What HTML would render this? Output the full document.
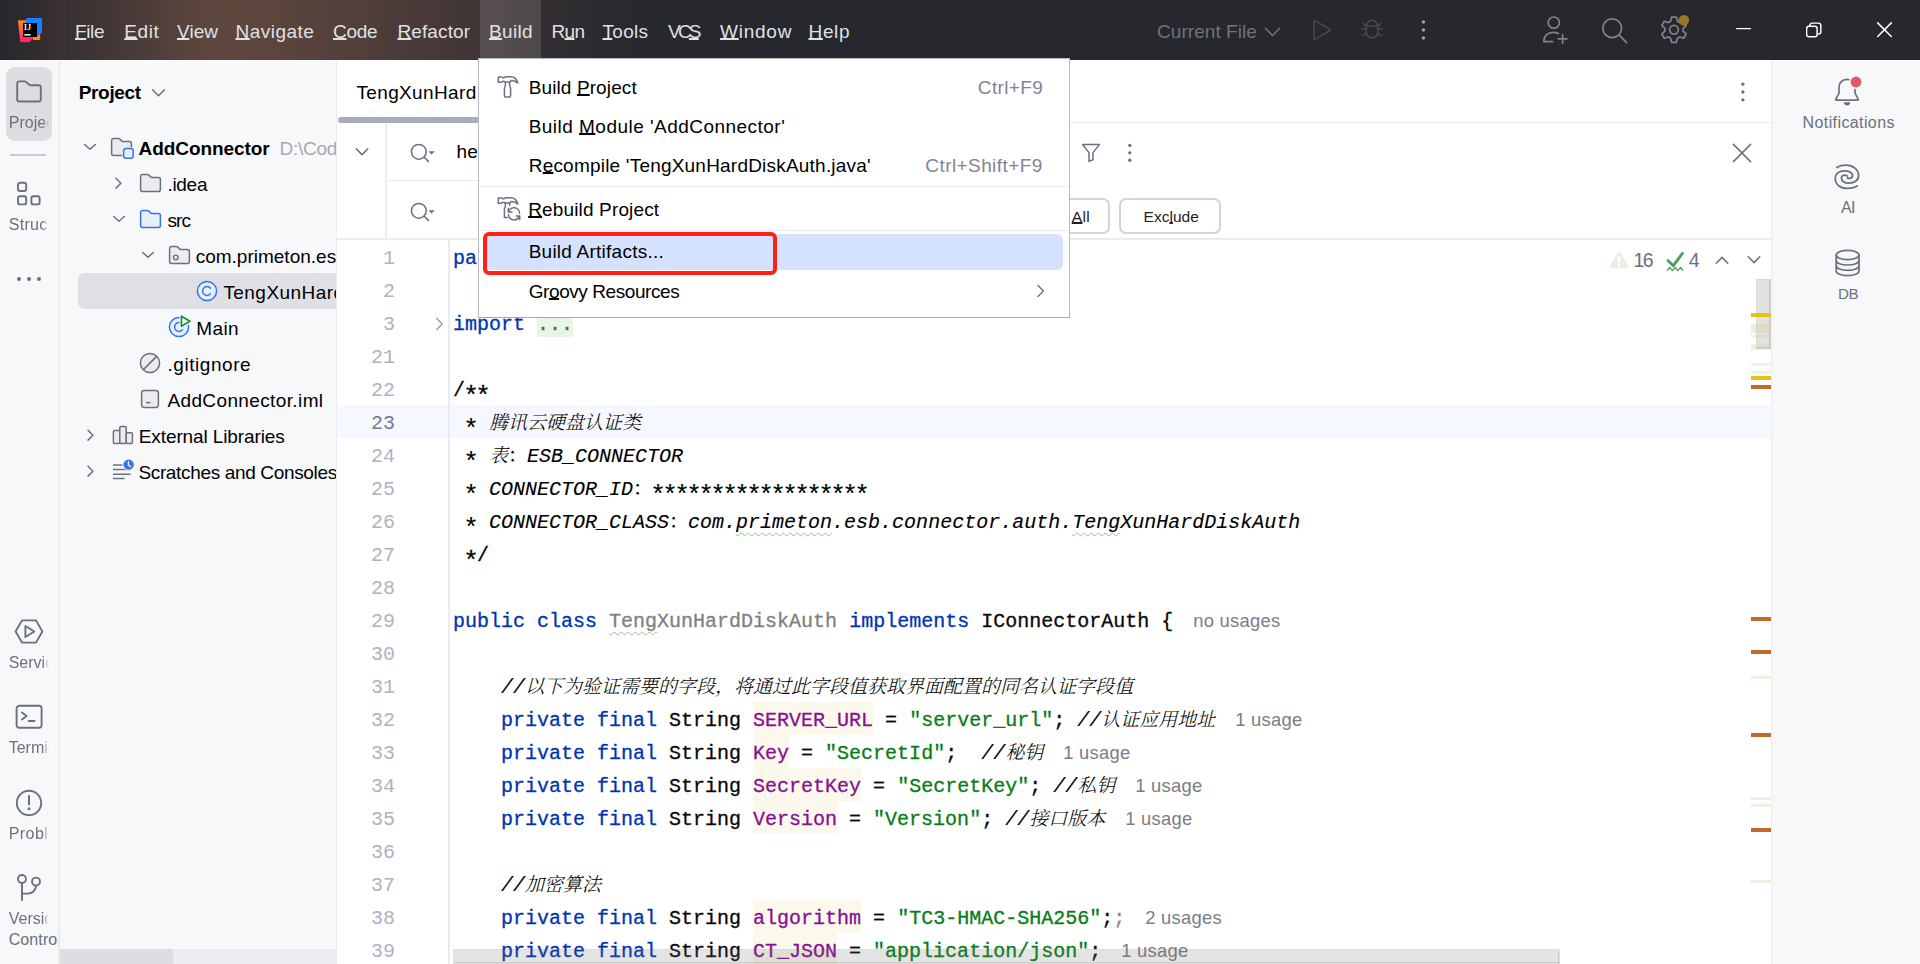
<!DOCTYPE html>
<html lang="en"><head><meta charset="utf-8"><title>AddConnector – TengXunHardDiskAuth.java</title>
<style>
html,body{margin:0;padding:0}
body{width:1920px;height:964px;overflow:hidden;background:#fff;position:relative;font-family:"Liberation Sans","Noto Sans CJK SC",sans-serif;-webkit-font-smoothing:antialiased}
.t{position:absolute;line-height:0;white-space:nowrap}
.t:before{content:"";display:inline-block;height:40px;width:0}
u{text-decoration:underline;text-underline-offset:0.3px;text-decoration-thickness:var(--ulw,1.5px);text-decoration-skip-ink:none}
.mono{font-family:"Liberation Mono","Noto Serif CJK SC",monospace}
.clip{overflow:hidden;padding-bottom:12px}
svg{overflow:visible}

.k{color:#0033b3}.s{color:#067d17}.f{color:#871094}.c{font-style:italic;color:#000;-webkit-text-stroke:0.12px currentColor}.cj{font-size:19px;-webkit-text-stroke:0;font-weight:300}
.h{font-family:"Liberation Sans","Noto Sans CJK SC",sans-serif;font-size:18.4px;color:#7a7e85;margin-left:20px;font-style:normal;-webkit-text-stroke:0;letter-spacing:0.25px}
.w{text-decoration:underline wavy #8fbf8f;text-decoration-thickness:1px;text-underline-offset:4px;text-decoration-skip-ink:none}
.g{color:#808080}
.a{font-size:26px;letter-spacing:-3.6px;position:relative;top:8.2px;margin-left:-1.8px;margin-right:1.8px;font-style:normal}
.code{white-space:pre;-webkit-text-stroke:0.3px currentColor}

</style></head><body>
<div id="titlebar" style="position:absolute;left:0;top:0;width:1920px;height:60px;background:#27282e">
<div class="" style="position:absolute;left:0px;top:0px;width:66px;height:60px;background:linear-gradient(90deg,#27282e 0px,#2c2a2e 25px,#3c3233 66px);"></div>
<div class="" style="position:absolute;left:66px;top:0px;width:640px;height:60px;background:linear-gradient(90deg,#373031 0px,#4a3b38 70px,#5b453d 130px,#5f473e 165px,#5a443c 215px,#4c3c39 330px,#3f3435 420px,#332e31 480px,#2a2a2f 540px,#27282e 600px);"></div>
<div class="" style="position:absolute;left:480px;top:0px;width:61px;height:60px;background:rgba(255,255,255,0.13);"></div>
</div>
<svg style="position:absolute;left:16px;top:16px;" width="28" height="28" viewBox="0 0 28 28" fill="none">
<defs><linearGradient id="lg1" x1="4" y1="4" x2="14" y2="26" gradientUnits="userSpaceOnUse"><stop offset="0" stop-color="#ff8a1a"/><stop offset="0.45" stop-color="#ff5a3c"/><stop offset="0.75" stop-color="#ff2d5e"/><stop offset="1" stop-color="#ff2d5e"/></linearGradient>
<linearGradient id="lg2" x1="10" y1="2" x2="26" y2="18" gradientUnits="userSpaceOnUse"><stop offset="0" stop-color="#0a84ff"/><stop offset="1" stop-color="#1f7bff"/></linearGradient></defs>
<path d="M2.6 4.2h7.2l8.4 16.5-4.6 5.5H5.2a1 1 0 0 1-1-.9L2 5.2a.9.9 0 0 1 .6-1z" fill="url(#lg1)"/>
<path d="M17 19h7.2v4a1 1 0 0 1-1 1H17z" fill="#ff8a00"/>
<path d="M11 2h14a1 1 0 0 1 1 1v13.5l-4.5 3.5H9.5V4z" fill="url(#lg2)"/>
<path d="M21.2 17.5l4.8-1.5-3 3.5h-2z" fill="#5b6bf0"/>
<rect x="7" y="7" width="14" height="14" fill="#000"/>
<rect x="8.3" y="18" width="6.3" height="1.7" fill="#d8d8d8"/>
<text x="8.1" y="13.8" font-family="Liberation Serif,serif" font-weight="bold" font-size="7.6" fill="#fff" letter-spacing="0.2">IJ</text>
</svg>
<div class="t " style="left:75.0px;top:-2.0px;font-size:19px;color:#dfe1e5;letter-spacing:-0.38px;"><u>F</u>ile</div>
<div class="t " style="left:124.3px;top:-2.0px;font-size:19px;color:#dfe1e5;letter-spacing:0.59px;"><u>E</u>dit</div>
<div class="t " style="left:177.0px;top:-2.0px;font-size:19px;color:#dfe1e5;letter-spacing:0.03px;"><u>V</u>iew</div>
<div class="t " style="left:235.5px;top:-2.0px;font-size:19px;color:#dfe1e5;letter-spacing:0.47px;"><u>N</u>avigate</div>
<div class="t " style="left:333.0px;top:-2.0px;font-size:19px;color:#dfe1e5;letter-spacing:-0.30px;"><u>C</u>ode</div>
<div class="t " style="left:397.5px;top:-2.0px;font-size:19px;color:#dfe1e5;letter-spacing:0.10px;"><u>R</u>efactor</div>
<div class="t " style="left:489.0px;top:-2.0px;font-size:19px;color:#dfe1e5;letter-spacing:0.32px;"><u>B</u>uild</div>
<div class="t " style="left:551.5px;top:-2.0px;font-size:19px;color:#dfe1e5;letter-spacing:-0.68px;">R<u>u</u>n</div>
<div class="t " style="left:602.5px;top:-2.0px;font-size:19px;color:#dfe1e5;letter-spacing:0.28px;"><u>T</u>ools</div>
<div class="t " style="left:668.0px;top:-2.0px;font-size:19px;color:#dfe1e5;letter-spacing:-2.77px;">VC<u>S</u></div>
<div class="t " style="left:720.0px;top:-2.0px;font-size:19px;color:#dfe1e5;letter-spacing:0.77px;"><u>W</u>indow</div>
<div class="t " style="left:808.5px;top:-2.0px;font-size:19px;color:#dfe1e5;letter-spacing:0.64px;"><u>H</u>elp</div>
<div class="t " style="left:1157.0px;top:-2.0px;font-size:19px;color:#6f737a;letter-spacing:0.05px;">Current File</div>
<svg style="position:absolute;left:1264px;top:26px;" width="17" height="12" viewBox="0 0 17 12" fill="none"><path d="M1.5 2.5l7 7 7-7" stroke="#6f737a" stroke-width="1.6" stroke-linecap="round" stroke-linejoin="round"/></svg>
<svg style="position:absolute;left:1311px;top:19px;" width="22" height="22" viewBox="0 0 22 22" fill="none"><path d="M3 2.6v16.8a.8.8 0 0 0 1.2.7l14.6-8.4a.8.8 0 0 0 0-1.4L4.2 1.9A.8.8 0 0 0 3 2.6z" stroke="#46484e" stroke-width="1.6" stroke-linejoin="round"/></svg>
<svg style="position:absolute;left:1360px;top:18px;" width="24" height="22" viewBox="0 0 24 22" fill="none"><g stroke="#46484e" stroke-width="1.6" stroke-linecap="round" stroke-linejoin="round">
<path d="M7 7.2a5 5 0 0 1 10 0"/><path d="M6.2 8h11.6v6a5.8 5.8 0 0 1-11.6 0z"/>
<path d="M6 11H1.8M6 15.5l-3.6 2.3M6.3 8L3.3 5.4M18 11h4.2M18 15.5l3.6 2.3M17.7 8l3-2.6"/></g></svg>
<svg style="position:absolute;left:1418px;top:18px;" width="10" height="24" viewBox="0 0 10 24" fill="none"><g fill="#9da0a8"><circle cx="5.4" cy="4" r="1.75"/><circle cx="5.4" cy="12" r="1.75"/><circle cx="5.4" cy="20" r="1.75"/></g></svg>
<svg style="position:absolute;left:1542px;top:15px;" width="28" height="30" viewBox="0 0 28 30" fill="none"><g stroke="#7f838c" stroke-width="1.7" stroke-linecap="round" stroke-linejoin="round">
<circle cx="11.8" cy="7.6" r="5.6"/><path d="M10.6 26.6H1.8c0-5.6 4-9.2 9.6-9.2 1.8 0 3.6.4 5 1.2"/><path d="M20.6 19.6v8.6M16.3 23.9h8.6"/></g></svg>
<svg style="position:absolute;left:1601px;top:17px;" width="28" height="28" viewBox="0 0 28 28" fill="none"><g stroke="#7f838c" stroke-width="1.8" stroke-linecap="round"><circle cx="11.2" cy="11.2" r="9.4"/><path d="M18.2 18.2l7.4 7.4"/></g></svg>
<svg style="position:absolute;left:1660px;top:15px;" width="30" height="30" viewBox="0 0 30 30" fill="none"><g stroke="#7f838c" stroke-width="1.45" stroke-linejoin="round" transform="translate(14 15) scale(1.18) translate(-14 -14.4)">
<path d="M11.9 2.2h4.2l.8 3.5 1.9 1.1 3.4-1.1 2.1 3.7-2.6 2.4v2.2l2.6 2.4-2.1 3.7-3.4-1.1-1.9 1.1-.8 3.5h-4.2l-.8-3.5-1.9-1.1-3.4 1.1-2.1-3.7 2.6-2.4v-2.2L3.7 9.4l2.1-3.7 3.4 1.1 1.9-1.1z" transform="translate(0,1.3)"/>
<circle cx="14" cy="14.2" r="3.7"/></g>
<circle cx="23.8" cy="5.3" r="5.4" fill="#9e7527"/></svg>
<svg style="position:absolute;left:1735px;top:26px;" width="18" height="6" viewBox="0 0 18 6" fill="none"><path d="M1.2 2.6h14.8" stroke="#fff" stroke-width="1.25"/></svg>
<svg style="position:absolute;left:1804.8px;top:21.6px;" width="19" height="17" viewBox="0 0 19 17" fill="none"><g stroke="#fff" stroke-width="1.55" fill="none" transform="scale(0.93)"><rect x="1.8" y="4.6" width="11.2" height="11.2" rx="2.4"/><path d="M5.2 4.4V3.6a2.4 2.4 0 0 1 2.4-2.4h7a2.4 2.4 0 0 1 2.4 2.4v7a2.4 2.4 0 0 1-2.4 2.4h-1.4"/></g></svg>
<svg style="position:absolute;left:1876px;top:21px;" width="17" height="17" viewBox="0 0 17 17" fill="none"><path d="M1.7 1.9l13.6 13.6M15.3 1.9L1.7 15.5" stroke="#fff" stroke-width="1.5" stroke-linecap="round"/></svg>
<div class="" style="position:absolute;left:0px;top:61px;width:58px;height:903px;background:#f7f8fa;"></div>
<div class="" style="position:absolute;left:0px;top:60px;width:1920px;height:1px;background:#fdfdfe;"></div>
<div class="" style="position:absolute;left:58px;top:61px;width:2px;height:903px;background:#ebecf0;"></div>
<div class="" style="position:absolute;left:6px;top:67px;width:46px;height:74px;background:#dcdde1;border-radius:9px"></div>
<svg style="position:absolute;left:15px;top:80px;" width="28" height="23" viewBox="0 0 28 23" fill="none"><path d="M2.2 3.4a2 2 0 0 1 2-2h5.6a2 2 0 0 1 1.3.5l3.2 2.9a2 2 0 0 0 1.3.5h8.2a2 2 0 0 1 2 2v12.2a2 2 0 0 1-2 2H4.2a2 2 0 0 1-2-2z" stroke="#6c707e" stroke-width="1.9" stroke-linejoin="round"/></svg>
<div class="t" style="left:8.7px;top:88px;font-size:16px;color:#6c707e;width:40.5px;overflow:hidden;padding-bottom:12px;letter-spacing:0.05px;-webkit-mask-image:linear-gradient(90deg,#000 84%,transparent 100%);mask-image:linear-gradient(90deg,#000 84%,transparent 100%);">Project</div>
<div class="" style="position:absolute;left:10px;top:154px;width:36px;height:1.5px;background:#c9ccd6;"></div>
<svg style="position:absolute;left:16px;top:181px;" width="26" height="26" viewBox="0 0 26 26" fill="none"><g stroke="#6c707e" stroke-width="1.9"><rect x="2" y="1.8" width="8.2" height="8.2" rx="2"/><rect x="2" y="15.2" width="8.2" height="8.2" rx="2"/><rect x="15.4" y="15.2" width="8.2" height="8.2" rx="2"/></g></svg>
<div class="t" style="left:8.7px;top:190px;font-size:16px;color:#6c707e;width:40.5px;overflow:hidden;padding-bottom:12px;letter-spacing:0.30px;-webkit-mask-image:linear-gradient(90deg,#000 84%,transparent 100%);mask-image:linear-gradient(90deg,#000 84%,transparent 100%);">Structure</div>
<div class="" style="position:absolute;left:17px;top:277px;width:4px;height:4px;background:#6c707e;border-radius:50%"></div>
<div class="" style="position:absolute;left:27px;top:277px;width:4px;height:4px;background:#6c707e;border-radius:50%"></div>
<div class="" style="position:absolute;left:37px;top:277px;width:4px;height:4px;background:#6c707e;border-radius:50%"></div>
<svg style="position:absolute;left:14px;top:618px;" width="30" height="27" viewBox="0 0 30 27" fill="none"><g stroke="#6c707e" stroke-width="1.9" stroke-linejoin="round"><path d="M1.6 13.5L8 2.4h14L28.4 13.5 22 24.6H8z"/><path d="M11.4 8v11l9-5.5z"/></g></svg>
<div class="t" style="left:8.7px;top:628px;font-size:16px;color:#6c707e;width:40.5px;overflow:hidden;padding-bottom:12px;letter-spacing:0.00px;-webkit-mask-image:linear-gradient(90deg,#000 84%,transparent 100%);mask-image:linear-gradient(90deg,#000 84%,transparent 100%);">Services</div>
<svg style="position:absolute;left:15px;top:704px;" width="28" height="26" viewBox="0 0 28 26" fill="none"><g stroke="#6c707e" stroke-width="1.9" stroke-linecap="round" stroke-linejoin="round"><rect x="1.6" y="1.8" width="25" height="22" rx="2.6"/><path d="M7 8.4l4.6 3.6L7 15.6M13.6 17h6"/></g></svg>
<div class="t" style="left:8.7px;top:713px;font-size:16px;color:#6c707e;width:40.5px;overflow:hidden;padding-bottom:12px;letter-spacing:0.00px;-webkit-mask-image:linear-gradient(90deg,#000 84%,transparent 100%);mask-image:linear-gradient(90deg,#000 84%,transparent 100%);">Terminal</div>
<svg style="position:absolute;left:15px;top:789px;" width="28" height="28" viewBox="0 0 28 28" fill="none"><g stroke="#6c707e" stroke-width="1.9"><circle cx="14" cy="14" r="12.2"/><path d="M14 7v8.4" stroke-width="2" stroke-linecap="round"/></g><circle cx="14" cy="19.8" r="1.5" fill="#6c707e"/></svg>
<div class="t" style="left:8.7px;top:798.5px;font-size:16px;color:#6c707e;width:40.5px;overflow:hidden;padding-bottom:12px;letter-spacing:0.45px;-webkit-mask-image:linear-gradient(90deg,#000 84%,transparent 100%);mask-image:linear-gradient(90deg,#000 84%,transparent 100%);">Problems</div>
<svg style="position:absolute;left:16px;top:873px;" width="26" height="30" viewBox="0 0 26 30" fill="none"><g stroke="#6c707e" stroke-width="1.9" stroke-linecap="round"><circle cx="6" cy="6" r="4"/><circle cx="20" cy="8.6" r="4"/><path d="M6 10v17M6 20.6h6a8 8 0 0 0 8-8"/></g></svg>
<div class="t" style="left:8.7px;top:884px;font-size:16px;color:#6c707e;width:40.5px;overflow:hidden;padding-bottom:12px;letter-spacing:0.00px;-webkit-mask-image:linear-gradient(90deg,#000 84%,transparent 100%);mask-image:linear-gradient(90deg,#000 84%,transparent 100%);">Version</div>
<div class="t" style="left:8.7px;top:904.5px;font-size:16px;color:#6c707e;width:49.3px;overflow:hidden;padding-bottom:12px;letter-spacing:0.10px;">Control</div>
<div class="" style="position:absolute;left:60px;top:61px;width:276px;height:903px;background:#f7f8fa;overflow:hidden"></div>
<div class="t " style="left:78.7px;top:58.8px;font-size:19px;color:#000;font-weight:bold;letter-spacing:-0.32px;">Project</div>
<svg style="position:absolute;left:151px;top:88px;" width="15" height="10" viewBox="0 0 15 10" fill="none"><path d="M1.6 1.8l5.9 5.9 5.9-5.9" stroke="#6c707e" stroke-width="1.5" stroke-linecap="round" stroke-linejoin="round"/></svg>
<div class="" style="position:absolute;left:78px;top:273px;width:258px;height:35.5px;background:#dfe0e5;border-radius:7px 0 0 7px"></div>
<svg style="position:absolute;left:83px;top:143px;" width="14" height="10" viewBox="0 0 14 10" fill="none"><path d="M1.65 1.5l5.35 4.7 5.35-4.7" stroke="#6c707e" stroke-width="1.5" stroke-linecap="round" stroke-linejoin="round"/></svg>
<svg style="position:absolute;left:110px;top:137.1px;" width="23" height="20" viewBox="0 0 23 20" fill="none"><path d="M1.6 3.4a2 2 0 0 1 2-2h4.6a2 2 0 0 1 1.3.5l2.5 2.2a2 2 0 0 0 1.3.5h6.1a2 2 0 0 1 2 2v9.8a2 2 0 0 1-2 2H3.6a2 2 0 0 1-2-2z" stroke="#6c707e" stroke-width="1.5" fill="#ebecf0" stroke-linejoin="round"/><rect x="13.6" y="11.6" width="9.6" height="9.6" rx="2.4" fill="#f7f8fa" stroke="#f7f8fa" stroke-width="2.6"/><rect x="13.6" y="11.6" width="9.6" height="9.6" rx="2.4" fill="#e7effd" stroke="#3574f0" stroke-width="1.5"/></svg>
<div class="t " style="left:138.6px;top:114.6px;font-size:19px;color:#000;font-weight:bold;letter-spacing:-0.07px;">AddConnector</div>
<div class="t clip" style="left:279.5px;top:114.6px;font-size:19px;color:#a6a9b3;width:56.5px;letter-spacing:-0.25px">D:\Code\AddConnector</div>
<svg style="position:absolute;left:114px;top:177px;" width="10" height="14" viewBox="0 0 10 14" fill="none"><path d="M2 1.3l4.9 4.9-4.9 4.9" stroke="#6c707e" stroke-width="1.5" stroke-linecap="round" stroke-linejoin="round"/></svg>
<svg style="position:absolute;left:139px;top:173.1px;" width="23" height="20" viewBox="0 0 23 20" fill="none"><path d="M1.6 3.4a2 2 0 0 1 2-2h4.6a2 2 0 0 1 1.3.5l2.5 2.2a2 2 0 0 0 1.3.5h6.1a2 2 0 0 1 2 2v9.8a2 2 0 0 1-2 2H3.6a2 2 0 0 1-2-2z" stroke="#6c707e" stroke-width="1.5" fill="#ebecf0" stroke-linejoin="round"/></svg>
<div class="t " style="left:167.4px;top:150.5px;font-size:19px;color:#000;letter-spacing:-0.28px;">.idea</div>
<svg style="position:absolute;left:112px;top:215px;" width="14" height="10" viewBox="0 0 14 10" fill="none"><path d="M1.65 1.5l5.35 4.7 5.35-4.7" stroke="#6c707e" stroke-width="1.5" stroke-linecap="round" stroke-linejoin="round"/></svg>
<svg style="position:absolute;left:139px;top:209.1px;" width="23" height="20" viewBox="0 0 23 20" fill="none"><path d="M1.6 3.4a2 2 0 0 1 2-2h4.6a2 2 0 0 1 1.3.5l2.5 2.2a2 2 0 0 0 1.3.5h6.1a2 2 0 0 1 2 2v9.8a2 2 0 0 1-2 2H3.6a2 2 0 0 1-2-2z" stroke="#3574f0" stroke-width="1.5" fill="#e7effd" stroke-linejoin="round"/></svg>
<div class="t " style="left:167.4px;top:186.5px;font-size:19px;color:#000;letter-spacing:-0.86px;">src</div>
<svg style="position:absolute;left:140.5px;top:251px;" width="14" height="10" viewBox="0 0 14 10" fill="none"><path d="M1.65 1.5l5.35 4.7 5.35-4.7" stroke="#6c707e" stroke-width="1.5" stroke-linecap="round" stroke-linejoin="round"/></svg>
<svg style="position:absolute;left:167.5px;top:245.1px;" width="23" height="20" viewBox="0 0 23 20" fill="none"><path d="M1.6 3.4a2 2 0 0 1 2-2h4.6a2 2 0 0 1 1.3.5l2.5 2.2a2 2 0 0 0 1.3.5h6.1a2 2 0 0 1 2 2v9.8a2 2 0 0 1-2 2H3.6a2 2 0 0 1-2-2z" stroke="#6c707e" stroke-width="1.5" fill="#ebecf0" stroke-linejoin="round"/><circle cx="7.8" cy="12.4" r="2.3" stroke="#6c707e" stroke-width="1.4" fill="none"/></svg>
<div class="t clip" style="left:195.7px;top:222.5px;font-size:19px;width:140.3px;letter-spacing:0px">com.primeton.esb.connector.auth</div>
<svg style="position:absolute;left:196px;top:280px;" width="22" height="22" viewBox="0 0 22 22" fill="none"><circle cx="11" cy="11" r="9.6" fill="#e7effd" stroke="#3574f0" stroke-width="1.5"/><path d="M14.4 8.2a4.4 4.4 0 1 0 0 5.6" stroke="#3574f0" stroke-width="1.5" stroke-linecap="round" fill="none"/></svg>
<div class="t clip" style="left:223.4px;top:258.8px;font-size:19px;width:112.6px;letter-spacing:0.45px">TengXunHardDiskAuth</div>
<svg style="position:absolute;left:168px;top:315.6px;" width="22" height="22" viewBox="0 0 22 22" fill="none"><circle cx="11" cy="11" r="9.6" fill="#e7effd" stroke="#3574f0" stroke-width="1.5"/><path d="M14.4 8.2a4.4 4.4 0 1 0 0 5.6" stroke="#3574f0" stroke-width="1.5" stroke-linecap="round" fill="none"/><path d="M13.2 -0.4v11.2l9.6-5.6z" fill="#f7f8fa" stroke="#f7f8fa" stroke-width="3.4" stroke-linejoin="round"/><path d="M13.4 0.2v10l8.6-5z" fill="#e6f7e9" stroke="#208a3c" stroke-width="1.6" stroke-linejoin="round"/></svg>
<div class="t " style="left:196.2px;top:294.6px;font-size:19px;color:#000;letter-spacing:0.44px;">Main</div>
<svg style="position:absolute;left:139px;top:352px;" width="22" height="22" viewBox="0 0 22 22" fill="none"><circle cx="11" cy="11" r="9.6" fill="#ebecf0" stroke="#6c707e" stroke-width="1.5"/><path d="M4.4 17.6L17.6 4.4" stroke="#6c707e" stroke-width="1.5"/></svg>
<div class="t " style="left:167.4px;top:330.5px;font-size:19px;color:#000;letter-spacing:0.57px;">.gitignore</div>
<svg style="position:absolute;left:140px;top:389px;" width="20" height="20" viewBox="0 0 20 20" fill="none"><rect x="1.6" y="1.4" width="16.8" height="17" rx="2.6" fill="#ebecf0" stroke="#6c707e" stroke-width="1.5"/><path d="M6 13.6h4.6" stroke="#6c707e" stroke-width="1.5"/></svg>
<div class="t " style="left:167.4px;top:366.7px;font-size:19px;color:#000;letter-spacing:0.38px;">AddConnector.iml</div>
<svg style="position:absolute;left:86px;top:429px;" width="10" height="14" viewBox="0 0 10 14" fill="none"><path d="M2 1.3l4.9 4.9-4.9 4.9" stroke="#6c707e" stroke-width="1.5" stroke-linecap="round" stroke-linejoin="round"/></svg>
<svg style="position:absolute;left:112px;top:425px;" width="22" height="20" viewBox="0 0 22 20" fill="none"><g stroke="#6c707e" stroke-width="1.5" fill="#ebecf0" stroke-linejoin="round"><rect x="1.4" y="5.6" width="6.4" height="12.8" rx="1.2"/><rect x="7.8" y="1.6" width="6.4" height="16.8" rx="1.2"/><rect x="14.2" y="7.8" width="6.2" height="10.6" rx="1.2"/></g></svg>
<div class="t " style="left:138.8px;top:402.8px;font-size:19px;color:#000;letter-spacing:-0.11px;">External Libraries</div>
<svg style="position:absolute;left:86px;top:465px;" width="10" height="14" viewBox="0 0 10 14" fill="none"><path d="M2 1.3l4.9 4.9-4.9 4.9" stroke="#6c707e" stroke-width="1.5" stroke-linecap="round" stroke-linejoin="round"/></svg>
<svg style="position:absolute;left:112px;top:458px;" width="24" height="22" viewBox="0 0 24 22" fill="none"><g stroke="#6c707e" stroke-width="1.5"><path d="M1 7h9.6M1 11.6h17.6M1 16.2h17.6M1 20.6h11.6"/></g><circle cx="16.6" cy="6.6" r="6.2" fill="#f7f8fa"/><circle cx="16.6" cy="6.6" r="5.2" fill="#3574f0"/><path d="M16.4 3.6v3.4l2 1.6" stroke="#fff" stroke-width="1.3" fill="none" stroke-linecap="round"/></svg>
<div class="t clip" style="left:138.4px;top:438.6px;font-size:19px;width:197.6px;letter-spacing:-0.34px">Scratches and Consoles</div>
<div class="" style="position:absolute;left:60px;top:949px;width:276px;height:15px;background:#ebecf0;"></div>
<div class="" style="position:absolute;left:60px;top:949px;width:113px;height:15px;background:#dcdde0;"></div>
<div class="" style="position:absolute;left:336px;top:61px;width:1px;height:903px;background:#ebecf0;"></div>
<div class="" style="position:absolute;left:1771px;top:61px;width:1px;height:903px;background:#ebecf0;"></div>
<div class="t clip" style="left:356.4px;top:58.8px;font-size:19px;width:121.4px;letter-spacing:0.37px">TengXunHardDiskAuth.java</div>
<div class="" style="position:absolute;left:337px;top:122px;width:1434px;height:1px;background:#ebecf0;"></div>
<div class="" style="position:absolute;left:337.5px;top:117px;width:330px;height:6px;background:#a8adbd;border-radius:3px"></div>
<svg style="position:absolute;left:1738px;top:80px;" width="10" height="24" viewBox="0 0 10 24" fill="none"><g fill="#6c707e"><circle cx="4.9" cy="4.2" r="1.65"/><circle cx="4.9" cy="12" r="1.65"/><circle cx="4.9" cy="19.8" r="1.65"/></g></svg>
<div class="" style="position:absolute;left:385px;top:124px;width:1.5px;height:115px;background:#ebecf0;"></div>
<div class="" style="position:absolute;left:386px;top:180px;width:680px;height:1px;background:#ebecf0;"></div>
<div class="" style="position:absolute;left:337px;top:238px;width:1434px;height:1.5px;background:#ebecf0;"></div>
<svg style="position:absolute;left:355px;top:147px;" width="14" height="10" viewBox="0 0 14 10" fill="none"><path d="M1.2 1.8l5.8 5.8 5.8-5.8" stroke="#6c707e" stroke-width="1.5" stroke-linecap="round" stroke-linejoin="round"/></svg>
<svg style="position:absolute;left:410px;top:142.6px;" width="26" height="20" viewBox="0 0 26 20" fill="none"><circle cx="8.8" cy="8.8" r="7.4" stroke="#6c707e" stroke-width="1.5"/><path d="M14.2 14.2l4.2 4.2" stroke="#6c707e" stroke-width="1.5" stroke-linecap="round"/><path d="M18.4 8.2h6.4l-3.2 3.4z" fill="#6c707e"/></svg>
<svg style="position:absolute;left:410px;top:201.6px;" width="26" height="20" viewBox="0 0 26 20" fill="none"><circle cx="8.8" cy="8.8" r="7.4" stroke="#6c707e" stroke-width="1.5"/><path d="M14.2 14.2l4.2 4.2" stroke="#6c707e" stroke-width="1.5" stroke-linecap="round"/><path d="M18.4 8.2h6.4l-3.2 3.4z" fill="#6c707e"/></svg>
<div class="t " style="left:456.5px;top:118.0px;font-size:19px;color:#000;letter-spacing:0.30px;">hello</div>
<svg style="position:absolute;left:1081px;top:143px;" width="20" height="20" viewBox="0 0 20 20" fill="none"><path d="M1.6 1.6h16.8l-6.4 8v7.2l-4 1.6v-8.8z" stroke="#6c707e" stroke-width="1.5" stroke-linejoin="round"/></svg>
<svg style="position:absolute;left:1125px;top:141px;" width="10" height="24" viewBox="0 0 10 24" fill="none"><g fill="#6c707e"><circle cx="4.8" cy="4.4" r="1.65"/><circle cx="4.8" cy="11.8" r="1.65"/><circle cx="4.8" cy="19.2" r="1.65"/></g></svg>
<svg style="position:absolute;left:1732px;top:143px;" width="20" height="20" viewBox="0 0 20 20" fill="none"><path d="M1.4 1.4l17.2 17.2M18.6 1.4L1.4 18.6" stroke="#6c707e" stroke-width="1.5" stroke-linecap="round"/></svg>
<div class="" style="position:absolute;left:860px;top:198px;width:96px;height:36px;background:#fff;border:2px solid #d1d4dc;border-radius:7px;box-sizing:border-box"></div>
<div class="t " style="left:880.0px;top:182.0px;font-size:15.5px;color:#1f2024;--ulw:1.8px;"><u>R</u>eplace</div>
<div class="" style="position:absolute;left:965px;top:198px;width:145px;height:36px;background:#fff;border:2px solid #d1d4dc;border-radius:7px;box-sizing:border-box"></div>
<div class="t " style="left:1008.2px;top:182.0px;font-size:15.5px;color:#1f2024;letter-spacing:0.40px;--ulw:1.8px;">Replace <u>A</u>ll</div>
<div class="" style="position:absolute;left:1119px;top:198px;width:102px;height:36px;background:#fff;border:2px solid #d1d4dc;border-radius:7px;box-sizing:border-box"></div>
<div class="t " style="left:1143.6px;top:182.0px;font-size:15.5px;color:#1f2024;--ulw:1.8px;">Exc<u>l</u>ude</div>
<div class="" style="position:absolute;left:337px;top:405px;width:1434px;height:33px;background:#f5f8fe;"></div>
<div class="" style="position:absolute;left:448px;top:240px;width:1.5px;height:724px;background:#ebecf0;"></div>
<div class="t mono" style="left:340px;width:55px;text-align:right;top:224px;font-size:20px;color:#aeb3c2">1</div>
<div class="t mono" style="left:340px;width:55px;text-align:right;top:257px;font-size:20px;color:#aeb3c2">2</div>
<div class="t mono" style="left:340px;width:55px;text-align:right;top:290px;font-size:20px;color:#aeb3c2">3</div>
<div class="t mono" style="left:340px;width:55px;text-align:right;top:323px;font-size:20px;color:#aeb3c2">21</div>
<div class="t mono" style="left:340px;width:55px;text-align:right;top:356px;font-size:20px;color:#aeb3c2">22</div>
<div class="t mono" style="left:340px;width:55px;text-align:right;top:389px;font-size:20px;color:#767a8a">23</div>
<div class="t mono" style="left:340px;width:55px;text-align:right;top:422px;font-size:20px;color:#aeb3c2">24</div>
<div class="t mono" style="left:340px;width:55px;text-align:right;top:455px;font-size:20px;color:#aeb3c2">25</div>
<div class="t mono" style="left:340px;width:55px;text-align:right;top:488px;font-size:20px;color:#aeb3c2">26</div>
<div class="t mono" style="left:340px;width:55px;text-align:right;top:521px;font-size:20px;color:#aeb3c2">27</div>
<div class="t mono" style="left:340px;width:55px;text-align:right;top:554px;font-size:20px;color:#aeb3c2">28</div>
<div class="t mono" style="left:340px;width:55px;text-align:right;top:587px;font-size:20px;color:#aeb3c2">29</div>
<div class="t mono" style="left:340px;width:55px;text-align:right;top:620px;font-size:20px;color:#aeb3c2">30</div>
<div class="t mono" style="left:340px;width:55px;text-align:right;top:653px;font-size:20px;color:#aeb3c2">31</div>
<div class="t mono" style="left:340px;width:55px;text-align:right;top:686px;font-size:20px;color:#aeb3c2">32</div>
<div class="t mono" style="left:340px;width:55px;text-align:right;top:719px;font-size:20px;color:#aeb3c2">33</div>
<div class="t mono" style="left:340px;width:55px;text-align:right;top:752px;font-size:20px;color:#aeb3c2">34</div>
<div class="t mono" style="left:340px;width:55px;text-align:right;top:785px;font-size:20px;color:#aeb3c2">35</div>
<div class="t mono" style="left:340px;width:55px;text-align:right;top:818px;font-size:20px;color:#aeb3c2">36</div>
<div class="t mono" style="left:340px;width:55px;text-align:right;top:851px;font-size:20px;color:#aeb3c2">37</div>
<div class="t mono" style="left:340px;width:55px;text-align:right;top:884px;font-size:20px;color:#aeb3c2">38</div>
<div class="t mono" style="left:340px;width:55px;text-align:right;top:917px;font-size:20px;color:#aeb3c2">39</div>
<svg style="position:absolute;left:434.7px;top:316.8px;" width="10" height="14" viewBox="0 0 10 14" fill="none"><path d="M1.8 1.4l5.4 5.6-5.4 5.6" stroke="#9a9fae" stroke-width="1.5" stroke-linecap="round" stroke-linejoin="round"/></svg>
<div class="" style="position:absolute;left:753px;top:702px;width:120px;height:33px;background:#fcf9ec;"></div>
<div class="" style="position:absolute;left:753px;top:735px;width:36px;height:33px;background:#fcf9ec;"></div>
<div class="" style="position:absolute;left:753px;top:768px;width:108px;height:33px;background:#fcf9ec;"></div>
<div class="" style="position:absolute;left:753px;top:801px;width:84px;height:33px;background:#fcf9ec;"></div>
<div class="" style="position:absolute;left:753px;top:900px;width:108px;height:33px;background:#fcf9ec;"></div>
<div class="" style="position:absolute;left:753px;top:933px;width:84px;height:33px;background:#fcf9ec;"></div>
<div class="" style="position:absolute;left:537px;top:308px;width:36px;height:29px;background:#e9f5e6;"></div>
<div class="t mono code" style="left:453px;top:224px;font-size:20px;color:#080808"><span class="k">package</span> com.primeton.esb.connector.auth;</div>
<div class="t mono code" style="left:453px;top:290px;font-size:20px;color:#080808"><span class="k">import</span> <span style="color:#5a6b55">...</span></div>
<div class="t mono code" style="left:453px;top:356px;font-size:20px;color:#080808">/<span class="a">**</span></div>
<div class="t mono code" style="left:453px;top:389px;font-size:20px;color:#080808"><span class="c"> <span class="a">*</span> <span class="cj">腾讯云硬盘认证类</span></span></div>
<div class="t mono code" style="left:453px;top:422px;font-size:20px;color:#080808"><span class="c"> <span class="a">*</span> <span class="cj">表<span style="font-weight:500;font-style:normal">：</span></span>ESB_CONNECTOR</span></div>
<div class="t mono code" style="left:453px;top:455px;font-size:20px;color:#080808"><span class="c"> <span class="a">*</span> CONNECTOR_ID<span class="cj"><span style="font-weight:500;font-style:normal">：</span></span><span class="a">******************</span></span></div>
<div class="t mono code" style="left:453px;top:488px;font-size:20px;color:#080808"><span class="c"> <span class="a">*</span> CONNECTOR_CLASS<span class="cj"><span style="font-weight:500;font-style:normal">：</span></span>com.<span class="w">primeton</span>.esb.connector.auth.<span class="w">Teng</span>XunHardDiskAuth</span></div>
<div class="t mono code" style="left:453px;top:521px;font-size:20px;color:#080808"> <span class="a">*</span>/</div>
<div class="t mono code" style="left:453px;top:587px;font-size:20px;color:#080808"><span class="k">public</span> <span class="k">class</span> <span class="g"><span class="w">Teng</span>XunHardDiskAuth</span> <span class="k">implements</span> IConnectorAuth {<span class="h">no usages</span></div>
<div class="t mono code" style="left:453px;top:653px;font-size:20px;color:#080808">    <span class="c">//<span class="cj">以下为验证需要的字段，将通过此字段值获取界面配置的同名认证字段值</span></span></div>
<div class="t mono code" style="left:453px;top:686px;font-size:20px;color:#080808">    <span class="k">private</span> <span class="k">final</span> String <span class="f">SERVER_URL</span> = <span class="s">"server_url"</span>; <span class="c">//<span class="cj">认证应用地址</span></span><span class="h">1 usage</span></div>
<div class="t mono code" style="left:453px;top:719px;font-size:20px;color:#080808">    <span class="k">private</span> <span class="k">final</span> String <span class="f">Key</span> = <span class="s">"SecretId"</span>;  <span class="c">//<span class="cj">秘钥</span></span><span class="h">1 usage</span></div>
<div class="t mono code" style="left:453px;top:752px;font-size:20px;color:#080808">    <span class="k">private</span> <span class="k">final</span> String <span class="f">SecretKey</span> = <span class="s">"SecretKey"</span>; <span class="c">//<span class="cj">私钥</span></span><span class="h">1 usage</span></div>
<div class="t mono code" style="left:453px;top:785px;font-size:20px;color:#080808">    <span class="k">private</span> <span class="k">final</span> String <span class="f">Version</span> = <span class="s">"Version"</span>; <span class="c">//<span class="cj">接口版本</span></span><span class="h">1 usage</span></div>
<div class="t mono code" style="left:453px;top:851px;font-size:20px;color:#080808">    <span class="c">//<span class="cj">加密算法</span></span></div>
<div class="t mono code" style="left:453px;top:884px;font-size:20px;color:#080808">    <span class="k">private</span> <span class="k">final</span> String <span class="f">algorithm</span> = <span class="s">"TC3-HMAC-SHA256"</span>;<span style="color:#8c8c8c">;</span><span class="h">2 usages</span></div>
<div class="t mono code" style="left:453px;top:917px;font-size:20px;color:#080808">    <span class="k">private</span> <span class="k">final</span> String <span class="f">CT_JSON</span> = <span class="s">"application/json"</span>;<span class="h">1 usage</span></div>
<svg style="position:absolute;left:1609px;top:251px;" width="20" height="18" viewBox="0 0 20 18" fill="none"><path d="M10 1.2c.8 0 1.4.4 1.8 1.1l7 12.2c.8 1.4-.2 2.7-1.8 2.7H3c-1.600 0-2.600-1.300-1.800-2.700l7-12.200c.400-.700 1-1.100 1.800-1.100z" fill="#f1ece1"/><path d="M10 6v5.400" stroke="#fff" stroke-width="2" stroke-linecap="round"/><circle cx="10" cy="14.3" r="1.2" fill="#fff"/></svg>
<div class="t " style="left:1633.5px;top:227.0px;font-size:19.5px;color:#6c707e;letter-spacing:-1.69px;">16</div>
<svg style="position:absolute;left:1666px;top:251px;" width="20" height="22" viewBox="0 0 20 22" fill="none"><path d="M2 9.600l5.200 5.200L16.400 2.400" stroke="#4a9f55" stroke-width="2.800" stroke-linecap="round" stroke-linejoin="round"/><path d="M1 19.600l2.700-3.200 2.700 3.200 2.700-3.200 2.700 3.200 2.700-3.200 2.700 3.200" stroke="#4a9f55" stroke-width="1.300" fill="none" stroke-linejoin="round"/></svg>
<div class="t " style="left:1688.8px;top:227.0px;font-size:19.5px;color:#6c707e;">4</div>
<svg style="position:absolute;left:1715px;top:255px;" width="14" height="10" viewBox="0 0 14 10" fill="none"><path d="M1.2 8.200l5.800-5.800 5.800 5.800" stroke="#6c707e" stroke-width="1.500" stroke-linecap="round" stroke-linejoin="round"/></svg>
<svg style="position:absolute;left:1747px;top:255px;" width="14" height="10" viewBox="0 0 14 10" fill="none"><path d="M1.200 1.800l5.800 5.800 5.800-5.800" stroke="#6c707e" stroke-width="1.500" stroke-linecap="round" stroke-linejoin="round"/></svg>
<div class="" style="position:absolute;left:1756px;top:279px;width:15px;height:70px;background:rgba(110,110,110,0.20);box-sizing:border-box;border:1px solid rgba(90,90,90,0.06)"><div style="position:absolute;right:0;top:0;bottom:0;width:1.5px;background:rgba(60,60,60,0.18)"></div><div style="position:absolute;left:0;right:0;bottom:0;height:1.5px;background:rgba(60,60,60,0.18)"></div></div>
<div class="" style="position:absolute;left:1751px;top:313px;width:20px;height:4px;background:#e9c016;"></div>
<div class="" style="position:absolute;left:1751px;top:324px;width:20px;height:9px;background:rgba(222,208,176,0.42);"></div>
<div class="" style="position:absolute;left:1751px;top:334.5px;width:20px;height:3px;background:rgba(222,208,176,0.32);"></div>
<div class="" style="position:absolute;left:1751px;top:343.5px;width:20px;height:6px;background:rgba(222,208,176,0.38);"></div>
<div class="" style="position:absolute;left:1751px;top:363px;width:20px;height:3px;background:rgba(222,208,176,0.32);"></div>
<div class="" style="position:absolute;left:1751px;top:370.5px;width:20px;height:3px;background:rgba(222,208,176,0.32);"></div>
<div class="" style="position:absolute;left:1751px;top:376px;width:20px;height:4px;background:#e9c016;"></div>
<div class="" style="position:absolute;left:1751px;top:385px;width:20px;height:4px;background:#c4692c;"></div>
<div class="" style="position:absolute;left:1751px;top:617px;width:20px;height:4px;background:#c4692c;"></div>
<div class="" style="position:absolute;left:1751px;top:650px;width:20px;height:4px;background:#c4692c;"></div>
<div class="" style="position:absolute;left:1751px;top:733px;width:20px;height:4px;background:#c4692c;"></div>
<div class="" style="position:absolute;left:1751px;top:828px;width:20px;height:4px;background:#c4692c;"></div>
<div class="" style="position:absolute;left:1751px;top:676px;width:20px;height:3px;background:rgba(222,208,176,0.36);"></div>
<div class="" style="position:absolute;left:1751px;top:797px;width:20px;height:3px;background:rgba(222,208,176,0.36);"></div>
<div class="" style="position:absolute;left:1751px;top:804px;width:20px;height:3px;background:rgba(222,208,176,0.36);"></div>
<div class="" style="position:absolute;left:1751px;top:880px;width:20px;height:3px;background:rgba(222,208,176,0.36);"></div>
<div class="" style="position:absolute;left:453px;top:949px;width:1107px;height:15px;background:rgba(110,110,110,0.185);box-sizing:border-box;border:1px solid rgba(90,90,90,0.05)"><div style="position:absolute;right:0;top:1px;bottom:0;width:1px;background:rgba(60,60,60,0.15)"></div><div style="position:absolute;left:0;right:0;bottom:0;height:1px;background:rgba(60,60,60,0.13)"></div></div>
<div class="" style="position:absolute;left:1772px;top:61px;width:148px;height:903px;background:#f7f8fa;"></div>
<svg style="position:absolute;left:1834px;top:77px;" width="28" height="30" viewBox="0 0 28 30" fill="none"><g stroke="#6c707e" stroke-width="1.700" stroke-linejoin="round" stroke-linecap="round"><path d="M13 2.400c-4.800 0-8 3.400-8 8v5.800l-3.200 6a.600.600 0 0 0 .500.900h21.400a.600.600 0 0 0 .500-.900l-3.200-6v-5.800c0-4.600-3.200-8-8-8z"/></g><path d="M9.900 25.300h6.300a3.150 3.150 0 0 1-6.300 0z" fill="#6c707e"/><circle cx="22" cy="5" r="7" fill="#f7f8fa"/><circle cx="22" cy="5" r="5.400" fill="#e55765"/></svg>
<div class="t " style="left:1802.6px;top:88.0px;font-size:16px;color:#6c707e;letter-spacing:0.39px;">Notifications</div>
<svg style="position:absolute;left:1825px;top:155px;" width="45" height="45" viewBox="0 0 45 45" fill="none"><g stroke="#6c707e" stroke-width="1.750" stroke-linecap="round" fill="none"><path d="M11.700 12.400C14.500 10.800 18 10.200 21 10.200C28 10.200 33.600 14.500 33.600 20.500C33.600 25.500 29 28.200 23.800 28.200C19.500 28.200 16.400 26 16.400 23.300C16.400 21.200 18.200 20.200 20 20.200C21 20.200 21.800 20.500 22.200 21"/><path d="M32.300 31C29.500 32.600 26 33.400 22.500 33.400C15.500 33.400 10.300 29.500 10.300 23.500C10.300 18.500 14.500 15.800 19.800 15.800C24.200 15.800 27.600 17.800 27.600 20.600C27.600 22.400 25.800 23.400 24 23.400C23.200 23.400 22.600 23.100 22.400 22.600"/></g></svg>
<div class="t " style="left:1841.0px;top:173.2px;font-size:16px;color:#6c707e;letter-spacing:-0.62px;">AI</div>
<svg style="position:absolute;left:1834px;top:249px;" width="28" height="28" viewBox="0 0 28 28" fill="none"><g stroke="#6c707e" stroke-width="1.700" fill="none"><ellipse cx="13.600" cy="6" rx="11.400" ry="4.600"/><path d="M2.200 6v16c0 2.600 5 4.600 11.400 4.600s11.400-2 11.400-4.600V6"/><path d="M2.200 11.400c0 2.600 5 4.600 11.400 4.600s11.400-2 11.400-4.600M2.200 16.800c0 2.600 5 4.600 11.400 4.600s11.400-2 11.400-4.600"/></g></svg>
<div class="t " style="left:1838.0px;top:259.0px;font-size:15.2px;color:#6c707e;letter-spacing:-0.35px;">DB</div>
<div id="popup" style="position:absolute;left:478px;top:58px;width:592px;height:260px;box-sizing:border-box;background:#fff;border:1px solid #b4b8c4;border-bottom-color:#a4a8b4"></div>
<div class="" style="position:absolute;left:479px;top:186px;width:590px;height:1px;background:#ebecf0;"></div>
<div class="" style="position:absolute;left:479px;top:229.5px;width:590px;height:1px;background:#ebecf0;"></div>
<div class="" style="position:absolute;left:486px;top:233.5px;width:577px;height:36px;background:#d4e2ff;border-radius:6px"></div>
<svg style="position:absolute;left:490px;top:68px;" width="40" height="40" viewBox="0 0 40 40" fill="none"><g stroke="#6c707e" stroke-width="1.500" stroke-linejoin="round" fill="none"><path d="M8.300 8.900H11.600C12.200 8.900 12.400 9.900 13.400 9.900C14.400 9.900 14.800 8.800 16 8.800H21C24.500 8.800 26.800 11.500 27.800 15C26.200 13.600 24 12.600 21.800 12.500C20.800 12.500 20.300 13.400 19.800 14H15C14.400 13.200 13.600 13.200 13.200 13.200C12.400 13.200 12.200 14.300 11.600 14.300H8.300Z"/><path d="M15.400 14V17C15.400 18.500 14.400 19 14.400 20.500V28a1 1 0 0 0 1 1H19.600a1 1 0 0 0 1-1V20.500C20.600 19 19.600 18.500 19.600 17V14"/></g></svg>
<svg style="position:absolute;left:490px;top:189px;" width="40" height="40" viewBox="0 0 40 40" fill="none"><g stroke="#6c707e" stroke-width="1.500" stroke-linejoin="round" stroke-linecap="round" fill="none"><path d="M8.300 8.900H11.600C12.200 8.900 12.400 9.900 13.400 9.900C14.400 9.900 14.800 8.800 16 8.800H21C24.500 8.800 26.800 11.500 27.800 15C26.200 13.600 24 12.600 21.800 12.500C20.800 12.500 20.300 13.400 19.800 14H15C14.400 13.200 13.600 13.200 13.200 13.200C12.400 13.200 12.200 14.300 11.600 14.300H8.300Z"/><path d="M15.400 14V17C15.400 18.500 14.400 19 14.400 20.500V28.600H17.200M19.600 14V16.200"/><path d="M18.600 22.900A5.600 5.600 0 0 1 29.600 24.400M18.300 19.300V22.900H22"/><path d="M18.500 25.600A5.600 5.600 0 0 0 29.200 27.600M26.200 27H29.700V30.700"/></g></svg>
<div class="t " style="left:528.7px;top:53.7px;font-size:19px;color:#000;letter-spacing:0.11px;">Build <u>P</u>roject</div>
<div class="t " style="left:528.7px;top:92.6px;font-size:19px;color:#000;letter-spacing:0.47px;">Build <u>M</u>odule 'AddConnector'</div>
<div class="t " style="left:528.7px;top:131.7px;font-size:19px;color:#000;letter-spacing:0.21px;">R<u>e</u>compile 'TengXunHardDiskAuth.java'</div>
<div class="t " style="left:528.2px;top:175.5px;font-size:19px;color:#000;letter-spacing:0.15px;"><u>R</u>ebuild Project</div>
<div class="t " style="left:528.7px;top:218.4px;font-size:19px;color:#000;letter-spacing:0.24px;">Build Artifacts...</div>
<div class="t " style="left:528.7px;top:257.5px;font-size:19px;color:#000;letter-spacing:-0.42px;">Gr<u>o</u>ovy Resources</div>
<div class="t " style="left:977.8px;top:53.7px;font-size:19px;color:#818594;letter-spacing:0.36px;">Ctrl+F9</div>
<div class="t " style="left:925.3px;top:131.7px;font-size:19px;color:#818594;letter-spacing:0.42px;">Ctrl+Shift+F9</div>
<svg style="position:absolute;left:1036px;top:284px;" width="10" height="14" viewBox="0 0 10 14" fill="none"><path d="M2 1.400l5.400 5.600L2 12.600" stroke="#6c707e" stroke-width="1.400" stroke-linecap="round" stroke-linejoin="round"/></svg>
<div class="" style="position:absolute;left:483px;top:232px;width:294px;height:42.5px;background:transparent;border:4px solid #ff2116;border-radius:6px;box-sizing:border-box"></div>
</body></html>
